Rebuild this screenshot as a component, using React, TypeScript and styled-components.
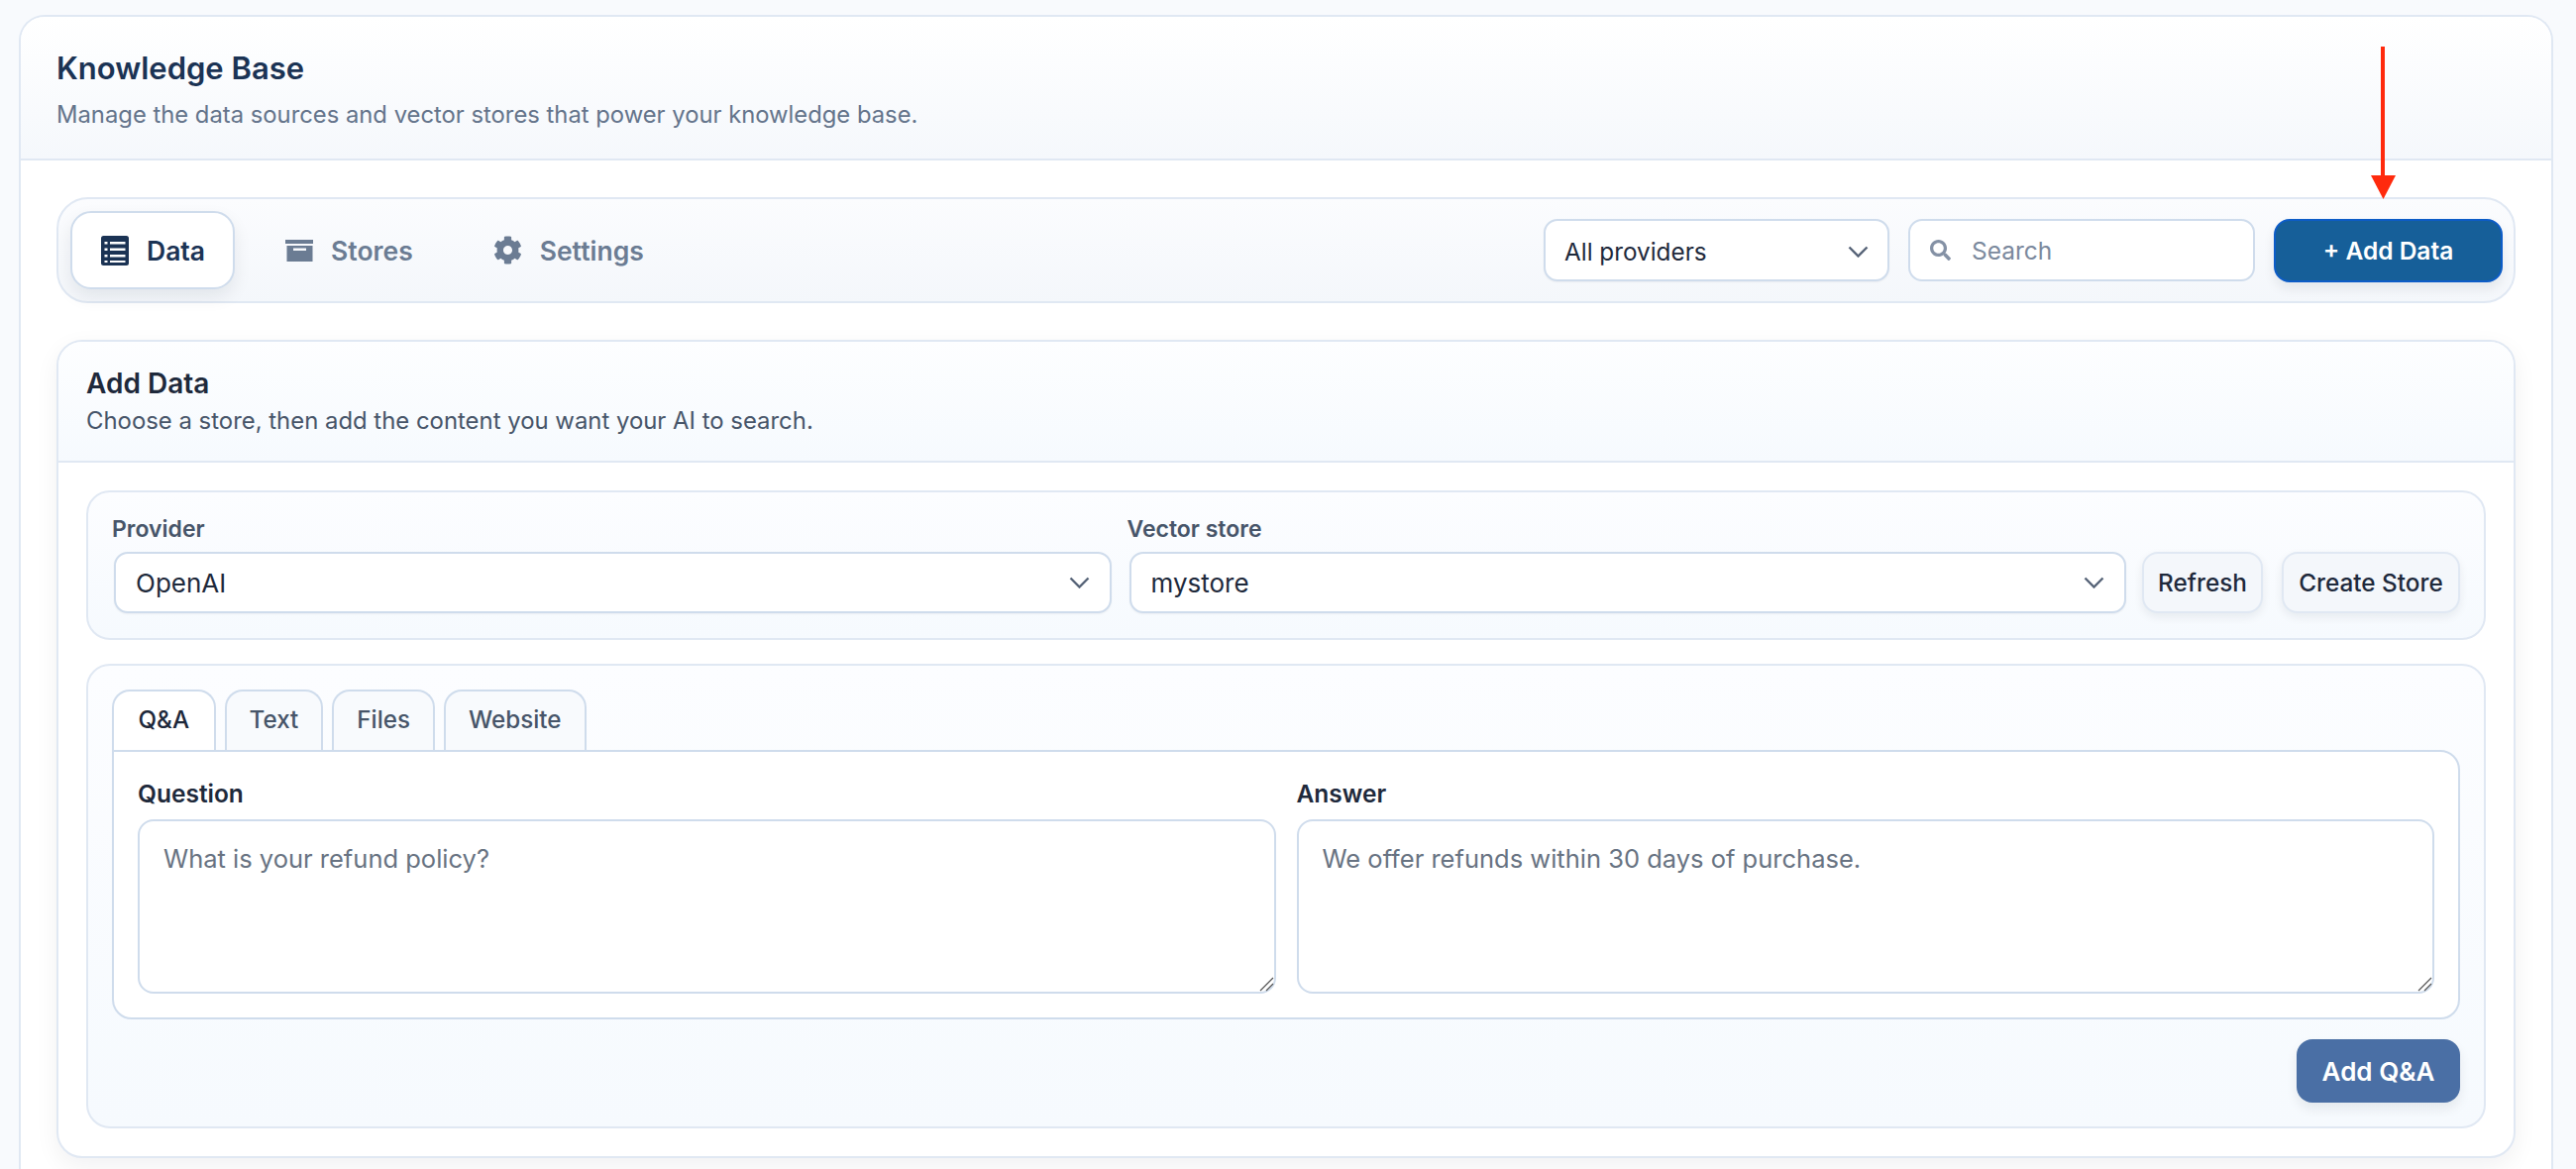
import React from 'react';
import styled, { createGlobalStyle } from 'styled-components';
import { FaCog, FaSearch } from 'react-icons/fa';

const colors = {
  line: '#e0e8f3',
  inputLine: '#cfdcec',
  ink: '#1e293b',
  title: '#1b3354',
  muted: '#64748b',
  slate: '#475569',
  navIdle: '#6b7c93',
};

const gripSvg =
  "data:image/svg+xml,%3Csvg xmlns='http://www.w3.org/2000/svg' width='15' height='15'%3E%3Cpath d='M1 14 L14 1 M7 14 L14 7' stroke='%23555' stroke-width='1.2' fill='none'/%3E%3C/svg%3E";

const GlobalStyle = createGlobalStyle`
  html, body {
    margin: 0;
    height: 1180px;
    overflow: hidden;
    background: #f8fafd;
    font-family: Inter, "Liberation Sans", sans-serif;
    color: ${colors.ink};
  }
  * { box-sizing: border-box; }
`;

const Page = styled.div`
  position: relative;
  padding: 15px 23px 0 19px;
`;

const Shell = styled.section`
  background: #fff;
  border: 2px solid ${colors.line};
  border-bottom: none;
  border-radius: 26px 26px 0 0;
  height: 1165px;
`;

const ShellHeader = styled.header`
  height: 145px;
  padding: 34px 36px 0;
  background: linear-gradient(180deg, #ffffff 0%, #f5f8fc 100%);
  border-bottom: 2px solid ${colors.line};
  border-radius: 24px 24px 0 0;
`;

const Title = styled.h1`
  margin: 0;
  font-size: 31px;
  line-height: 36px;
  font-weight: 600;
  color: ${colors.title};
`;

const Subtitle = styled.p`
  margin: 13px 0 0;
  font-size: 23.8px;
  line-height: 32px;
  color: ${colors.muted};
`;

const ShellBody = styled.div`
  padding: 37px 36px 0;
  display: flex;
  flex-direction: column;
  gap: 37px;
`;

const Toolbar = styled.div`
  height: 107px;
  display: flex;
  align-items: center;
  justify-content: space-between;
  padding: 0 11px 0 12px;
  background: linear-gradient(180deg, #fbfcfe 0%, #f4f7fb 100%);
  border: 2px solid ${colors.line};
  border-radius: 32px;
`;

const NavTabs = styled.nav`
  display: flex;
  align-items: center;
  gap: 20px;
`;

const NavTab = styled.button<{ $active?: boolean }>`
  height: 79px;
  display: flex;
  align-items: center;
  gap: 18px;
  padding: 0 28px 0 29px;
  font: 600 26.5px Inter, sans-serif;
  background: ${(p) => (p.$active ? '#fff' : 'transparent')};
  color: ${(p) => (p.$active ? colors.title : colors.navIdle)};
  border: 2px solid ${(p) => (p.$active ? colors.inputLine : 'transparent')};
  border-radius: 21px;
  box-shadow: ${(p) => (p.$active ? '0 8px 18px rgba(15, 23, 42, 0.08)' : 'none')};
  svg { flex: none; }
`;

const NavIcon = styled.svg`
  width: 28px;
  height: 30px;
`;

const GearIcon = styled(FaCog)`
  font-size: 29px;
`;

const Controls = styled.div`
  display: flex;
  align-items: center;
  gap: 19px;
`;

const SelectBox = styled.div<{ $filter?: boolean }>`
  display: flex;
  flex: none;
  width: ${(p) => (p.$filter ? '349px' : 'auto')};
  margin-left: ${(p) => (p.$filter ? '0' : '2px')};
  align-items: center;
  justify-content: space-between;
  height: ${(p) => (p.$filter ? '63px' : '62px')};
  padding: ${(p) => (p.$filter ? '2px 19px 0' : '0 20px')};
  background: #fff;
  border: 2px solid ${colors.inputLine};
  border-radius: 14px;
  font-size: ${(p) => (p.$filter ? '24.3px' : '26px')};
  color: ${colors.ink};
  box-shadow: 0 1px 2px rgba(15, 23, 42, 0.05);
`;

const Chevron = styled.svg`
  width: 21px;
  height: 12px;
  fill: none;
  stroke: #566377;
  stroke-width: 2.4;
`;

const SearchBox = styled.label`
  width: 350px;
  height: 63px;
  display: flex;
  align-items: center;
  gap: 21px;
  padding: 0 20px;
  background: #fff;
  border: 2px solid ${colors.inputLine};
  border-radius: 14px;
  color: #8491a5;
  font-size: 21px;
  svg { flex: none; }
`;

const SearchInput = styled.input`
  border: none;
  outline: none;
  width: 100%;
  padding: 0;
  background: transparent;
  font: 400 24.5px Inter, sans-serif;
  &::placeholder { color: #7b899d; opacity: 1; }
`;

const PrimaryButton = styled.button`
  width: 231px;
  height: 64px;
  background: #165f99;
  border: 2px solid #0c5cc7;
  border-radius: 16px;
  color: #fff;
  font: 600 24.5px Inter, sans-serif;
  box-shadow: 0 6px 12px rgba(15, 23, 42, 0.08);
`;

const Card = styled.section`
  background: #fff;
  border: 2px solid ${colors.line};
  border-radius: 26px;
  box-shadow: 0 8px 24px rgba(15, 23, 42, 0.06);
  height: 826px;
`;

const CardHeader = styled.header`
  height: 122px;
  padding: 24px 28px 0;
  background: linear-gradient(180deg, #fdfeff 0%, #f6fafe 100%);
  border-bottom: 2px solid ${colors.line};
  border-radius: 24px 24px 0 0;
`;

const CardTitle = styled.h2`
  margin: 0;
  font-size: 28px;
  line-height: 36px;
  font-weight: 600;
  color: ${colors.ink};
`;

const CardSubtitle = styled.p`
  margin: 4px 0 0;
  font-size: 23.9px;
  line-height: 32px;
  color: ${colors.slate};
`;

const CardBody = styled.div`
  padding: 28px 28px 0;
  display: flex;
  flex-direction: column;
  gap: 24px;
`;

const Panel = styled.div`
  border: 2px solid ${colors.line};
  border-radius: 24px;
  background: linear-gradient(180deg, #fcfdff 0%, #f6fafe 100%);
`;

const StoreRow = styled(Panel)`
  height: 151px;
  display: flex;
  align-items: flex-end;
  gap: 16px;
  padding: 0 24px 25px;
`;

const Field = styled.div`
  flex: 1;
  display: flex;
  flex-direction: column;
  gap: 9px;
`;

const FieldLabel = styled.label`
  font-size: 23px;
  line-height: 28px;
  font-weight: 600;
  color: ${colors.slate};
`;

const GhostButton = styled.button<{ $wide?: boolean }>`
  flex: none;
  width: ${(p) => (p.$wide ? '180px' : '122px')};
  margin-left: ${(p) => (p.$wide ? '3px' : '0')};
  height: 62px;
  padding: 0;
  background: #f4f7fb;
  border: 2px solid ${colors.line};
  border-radius: 16px;
  color: ${colors.ink};
  font: 500 24.3px Inter, sans-serif;
  white-space: nowrap;
  box-shadow: 0 4px 10px rgba(15, 23, 42, 0.07);
`;

const ContentPanel = styled(Panel)`
  height: 469px;
  padding: 24px 24px 0;
`;

const TabStrip = styled.div`
  display: flex;
  gap: 9px;
  height: 61px;
`;

const TabButton = styled.button<{ $active?: boolean }>`
  height: 61px;
  padding: 0 ${(p) => (p.$active ? '24.5px' : '23px')} 3px;
  background: ${(p) => (p.$active ? '#fff' : '#f8fafd')};
  border: 2px solid ${colors.inputLine};
  border-bottom: none;
  border-radius: 18px 18px 0 0;
  color: ${(p) => (p.$active ? colors.ink : colors.slate)};
  font: 500 24.2px Inter, sans-serif;
`;

const QaBox = styled.div`
  height: 272px;
  display: grid;
  grid-template-columns: 1fr 1fr;
  gap: 21px;
  padding: 27px 24px 0;
  background: #fff;
  border: 2px solid ${colors.inputLine};
  border-radius: 0 20px 20px 20px;
`;

const QaField = styled.div`
  display: flex;
  flex-direction: column;
  gap: 11px;
`;

const QaLabel = styled.label`
  font-size: 24.5px;
  line-height: 30px;
  font-weight: 600;
  color: ${colors.ink};
`;

const Area = styled.textarea`
  height: 176px;
  padding: 22px 24px;
  background: #fff;
  border: 2px solid ${colors.inputLine};
  border-radius: 16px;
  font: 400 25.5px/32px Inter, sans-serif;
  outline: none;
  &::placeholder { color: #687382; opacity: 1; }
  &::-webkit-resizer {
    background: url("${gripSvg}") no-repeat center;
  }
`;

const FormActions = styled.div`
  display: flex;
  justify-content: flex-end;
  padding-top: 20px;
`;

const SubmitButton = styled.button`
  width: 165px;
  height: 64px;
  background: #4a6fa5;
  border: none;
  border-radius: 16px;
  color: #fff;
  font: 600 26px Inter, sans-serif;
  box-shadow: 0 6px 12px rgba(15, 23, 42, 0.08);
`;

const Arrow = styled.svg`
  position: absolute;
  left: 2390px;
  top: 45px;
  width: 30px;
  height: 158px;
`;

function ChevronDown() {
  return (
    <Chevron viewBox="0 0 21 12">
      <path d="M1.5 1.5 L10.5 10.5 L19.5 1.5" />
    </Chevron>
  );
}

function DataIcon() {
  return (
    <NavIcon viewBox="0 0 28 30">
      <rect width="28" height="30" rx="2.5" fill="#1b3354" />
      <path
        d="M3.5 6h3v2.5h-3zM9 6h15.5v2.5H9zM3.5 12.5h3V15h-3zM9 12.5h15.5V15H9zM3.5 19h3v2.5h-3zM9 19h15.5v2.5H9zM3.5 25h3v2h-3zM9 25h15.5v2H9z"
        fill="#fff"
      />
    </NavIcon>
  );
}

function StoresIcon() {
  return (
    <NavIcon viewBox="0 0 28 30">
      <rect x="0" y="4" width="30" height="4" fill={colors.navIdle} />
      <path
        fillRule="evenodd"
        d="M1.5 10h26v16h-26zM8 12.5v2.5h13v-2.5z"
        fill={colors.navIdle}
      />
    </NavIcon>
  );
}

export default function App() {
  return (
    <Page>
      <GlobalStyle />
      <Shell>
        <ShellHeader>
          <Title>Knowledge Base</Title>
          <Subtitle>Manage the data sources and vector stores that power your knowledge base.</Subtitle>
        </ShellHeader>
        <ShellBody>
          <Toolbar>
            <NavTabs>
              <NavTab $active><DataIcon />Data</NavTab>
              <NavTab><StoresIcon />Stores</NavTab>
              <NavTab><GearIcon />Settings</NavTab>
            </NavTabs>
            <Controls>
              <SelectBox $filter>All providers<ChevronDown /></SelectBox>
              <SearchBox>
                <FaSearch />
                <SearchInput placeholder="Search" />
              </SearchBox>
              <PrimaryButton>+ Add Data</PrimaryButton>
            </Controls>
          </Toolbar>
          <Card>
            <CardHeader>
              <CardTitle>Add Data</CardTitle>
              <CardSubtitle>Choose a store, then add the content you want your AI to search.</CardSubtitle>
            </CardHeader>
            <CardBody>
              <StoreRow>
                <Field>
                  <FieldLabel>Provider</FieldLabel>
                  <SelectBox>OpenAI<ChevronDown /></SelectBox>
                </Field>
                <Field>
                  <FieldLabel>Vector store</FieldLabel>
                  <SelectBox>mystore<ChevronDown /></SelectBox>
                </Field>
                <GhostButton>Refresh</GhostButton>
                <GhostButton $wide>Create Store</GhostButton>
              </StoreRow>
              <ContentPanel>
                <TabStrip>
                  <TabButton $active>Q&amp;A</TabButton>
                  <TabButton>Text</TabButton>
                  <TabButton>Files</TabButton>
                  <TabButton>Website</TabButton>
                </TabStrip>
                <QaBox>
                  <QaField>
                    <QaLabel>Question</QaLabel>
                    <Area placeholder="What is your refund policy?" />
                  </QaField>
                  <QaField>
                    <QaLabel>Answer</QaLabel>
                    <Area placeholder="We offer refunds within 30 days of purchase." />
                  </QaField>
                </QaBox>
                <FormActions>
                  <SubmitButton>Add Q&amp;A</SubmitButton>
                </FormActions>
              </ContentPanel>
            </CardBody>
          </Card>
        </ShellBody>
      </Shell>
      <Arrow viewBox="0 0 30 158">
        <rect x="13" y="2" width="4" height="132" fill="#ff2a0d" />
        <polygon points="3,132 28,132 15.5,156" fill="#ff2a0d" />
      </Arrow>
    </Page>
  );
}
